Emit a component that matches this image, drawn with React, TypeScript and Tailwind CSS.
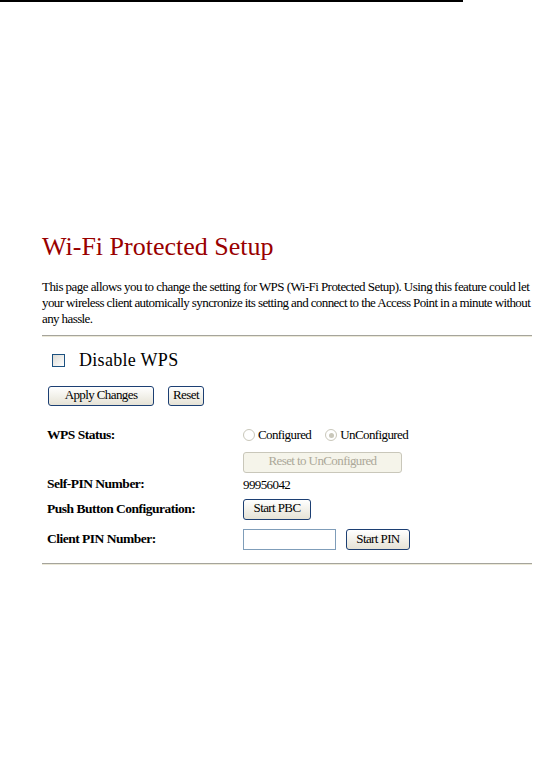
import React from "react"

const serif = "[font-family:'Liberation_Serif','Times_New_Roman',serif]"

const XpButton = ({ label, className = "" }: { label: string; className?: string }) => (
  <button
    type="button"
    className={`h-[20px] rounded-[3px] border border-[#1c3f73] bg-gradient-to-b from-white to-[#e6e3d6] pb-[3px] [font-family:'Liberation_Serif','Times_New_Roman',serif] text-[13px] leading-none tracking-[-0.6px] text-black ${className}`}
  >
    {label}
  </button>
)

const Radio = ({ checked }: { checked?: boolean }) => (
  <span className="flex h-[12px] w-[12px] items-center justify-center rounded-full border border-[#c9c7ba] bg-white">
    {checked && <span className="h-[5px] w-[5px] rounded-full bg-[#c9c7ba]" />}
  </span>
)

const Rule = () => (
  <div className="w-[490px] border-t border-b border-t-[#a5a49c] border-b-[#ece9d8]" />
)

export default function App() {
  return (
    <div className={`min-h-[768px] bg-white text-black ${serif}`}>
      <div className="h-[2px] w-[463px] bg-black" />
      <div className="ml-[42px] w-[490px] pt-[230px]">
        <h1 className="text-[26px] leading-[30px] text-[#990000]">Wi-Fi Protected Setup</h1>

        <div className="mt-[17px] text-[13px] leading-[16px] whitespace-nowrap">
          <div className="tracking-[-0.55px]">This page allows you to change the setting for WPS (Wi-Fi Protected Setup). Using this feature could let</div>
          <div className="tracking-[-0.6px]">your wireless client automically syncronize its setting and connect to the Access Point in a minute without</div>
          <div className="tracking-[-0.6px]">any hassle.</div>
        </div>

        <div className="mt-[8px]">
          <Rule />
        </div>

        <div className="mt-[13px] flex h-[20px] items-center pl-[10px]">
          <span className="h-[13px] w-[13px] border border-[#1c5180] bg-gradient-to-br from-[#dcdbd5] to-white" />
          <span className="ml-[14px] text-[18px] leading-[20px] tracking-[0.3px]">Disable WPS</span>
        </div>

        <div className="mt-[16px] flex items-center gap-[14px] pl-[6px]">
          <XpButton label="Apply Changes" className="w-[106px]" />
          <XpButton label="Reset" className="w-[36px]" />
        </div>

        <div className="mt-[18px] grid grid-cols-[196px_1fr] pl-[5px]">
          <div className="flex h-[22px] items-center text-[13.5px] font-bold tracking-[-0.5px]">WPS Status:</div>
          <div className="flex h-[22px] items-center text-[13px] tracking-[-0.6px]">
            <Radio />
            <span className="ml-[3px]">Configured</span>
            <span className="ml-[14px]"><Radio checked /></span>
            <span className="ml-[3px]">UnConfigured</span>
          </div>

          <div />
          <div className="mt-[2px]">
            <button
              type="button"
              disabled
              className="h-[21px] w-[159px] rounded-[3px] border border-[#c9c7ba] bg-[#f5f4ea] pb-[3px] [font-family:'Liberation_Serif','Times_New_Roman',serif] text-[13px] leading-none tracking-[-0.6px] text-[#aca899]"
            >
              Reset to UnConfigured
            </button>
          </div>

          <div className="mt-[3px] flex h-[18px] items-center text-[13.5px] font-bold tracking-[-0.5px]">Self-PIN Number:</div>
          <div className="mt-[3px] flex h-[18px] items-center text-[13px] tracking-[-0.6px]">99956042</div>

          <div className="mt-[5px] flex h-[21px] items-center text-[13.5px] font-bold tracking-[-0.5px]">Push Button Configuration:</div>
          <div className="mt-[5px] flex h-[21px] items-center">
            <XpButton label="Start PBC" className="h-[21px] w-[68px]" />
          </div>

          <div className="mt-[9px] flex h-[22px] items-center text-[13.5px] font-bold tracking-[-0.5px]">Client PIN Number:</div>
          <div className="mt-[9px] flex h-[22px] items-center">
            <input type="text" className="h-[21px] w-[93px] border border-[#7f9db9] bg-white px-1 text-[13px] outline-none" />
            <XpButton label="Start PIN" className="ml-[10px] h-[21px] w-[64px]" />
          </div>
        </div>

        <div className="mt-[12px]">
          <Rule />
        </div>
      </div>
    </div>
  )
}
